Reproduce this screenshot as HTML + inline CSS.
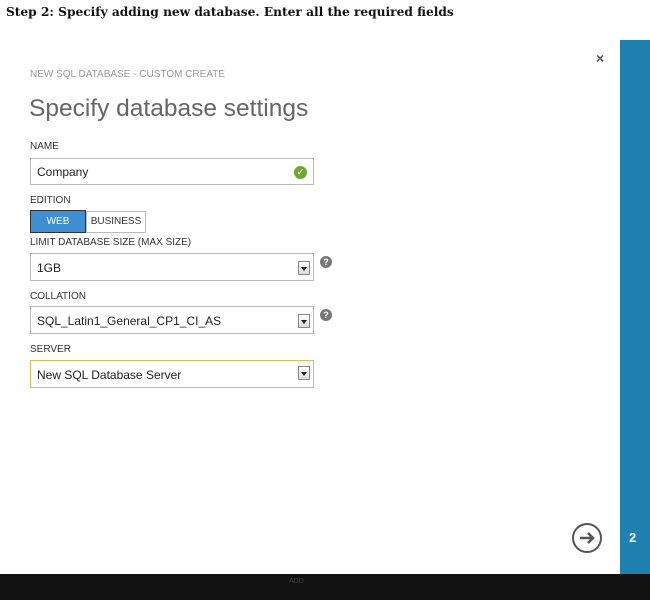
<!DOCTYPE html>
<html><head><style>
body{margin:0;width:650px;height:600px;position:relative;background:#fff;font-family:"Liberation Sans",sans-serif;overflow:hidden}
.a{position:absolute}
.lbl{position:absolute;left:30px;font-size:10px;color:#333}
.inp{position:absolute;left:30px;width:284px;height:26px;border:1px solid #bbb;box-sizing:border-box;font-size:12px;color:#222;line-height:26px;padding-left:6px}
.dd{position:absolute;right:3px;top:5px;width:12px;height:14px;border:1px solid #888;background:linear-gradient(#fff,#ddd);box-sizing:border-box}
.dd:after{content:"";position:absolute;left:2px;top:5px;border-left:3px solid transparent;border-right:3px solid transparent;border-top:4px solid #222}
.q{position:absolute;left:320px;width:12px;height:12px;border-radius:50%;background:#777;color:#fff;font-size:9px;font-weight:bold;text-align:center;line-height:12px}
</style></head><body>
<div class="a" style="left:6px;top:5px;font-family:'DejaVu Serif',serif;font-weight:bold;font-size:12.2px;color:#111;white-space:nowrap">Step 2: Specify adding new database. Enter all the required fields</div>
<div class="a" style="left:620px;top:40px;width:30px;height:534px;background:#1f7fae"></div>
<div class="a" style="left:629px;top:530px;color:#fff;font-weight:bold;font-size:13px">2</div>
<div class="a" style="left:0;top:574px;width:650px;height:26px;background:#111"></div>
<div class="a" style="left:289px;top:578px;color:#444;font-size:7px">ADD</div>
<div class="a" style="left:596px;top:50px;font-size:14px;font-weight:bold;color:#555">×</div>
<div class="a" style="left:30px;top:69px;font-size:10px;color:#999">NEW SQL DATABASE - CUSTOM CREATE</div>
<div class="a" style="left:29px;top:95px;font-size:24.5px;color:#666">Specify database settings</div>
<div class="lbl" style="top:141px">NAME</div>
<div class="inp" style="top:158px;height:27px">Company<div class="a" style="right:6px;top:7px;width:13px;height:13px;border-radius:50%;background:#6aaa2e;color:#fff;font-size:9px;line-height:13px;text-align:center;font-weight:bold">✓</div></div>
<div class="lbl" style="top:195px">EDITION</div>
<div class="a" style="left:30px;top:210px;width:56px;height:23px;background:#3d8fd1;border:1px solid #333;box-sizing:border-box;color:#fff;font-size:10px;text-align:center;line-height:21px">WEB</div>
<div class="a" style="left:86px;top:211px;width:60px;height:22px;border:1px solid #bbb;box-sizing:border-box;color:#333;font-size:10px;text-align:center;line-height:20px">BUSINESS</div>
<div class="lbl" style="top:237px">LIMIT DATABASE SIZE (MAX SIZE)</div>
<div class="inp" style="top:253px;height:28px;line-height:28px">1GB<div class="dd" style="top:7px"></div></div>
<div class="q" style="top:256px">?</div>
<div class="lbl" style="top:291px">COLLATION</div>
<div class="inp" style="top:306px;height:28px;line-height:28px">SQL_Latin1_General_CP1_CI_AS<div class="dd" style="top:7px"></div></div>
<div class="q" style="top:309px">?</div>
<div class="lbl" style="top:344px">SERVER</div>
<div class="inp" style="top:360px;height:28px;line-height:28px;border-color:#e0b860">New SQL Database Server<div class="dd" style="top:5px"></div></div>
<svg class="a" style="left:571px;top:522px" width="32" height="32"><circle cx="16" cy="16" r="14" fill="none" stroke="#555" stroke-width="2"/><path d="M9 16H22M17 11l5 5-5 5" fill="none" stroke="#555" stroke-width="2.5"/></svg>
</body></html>
